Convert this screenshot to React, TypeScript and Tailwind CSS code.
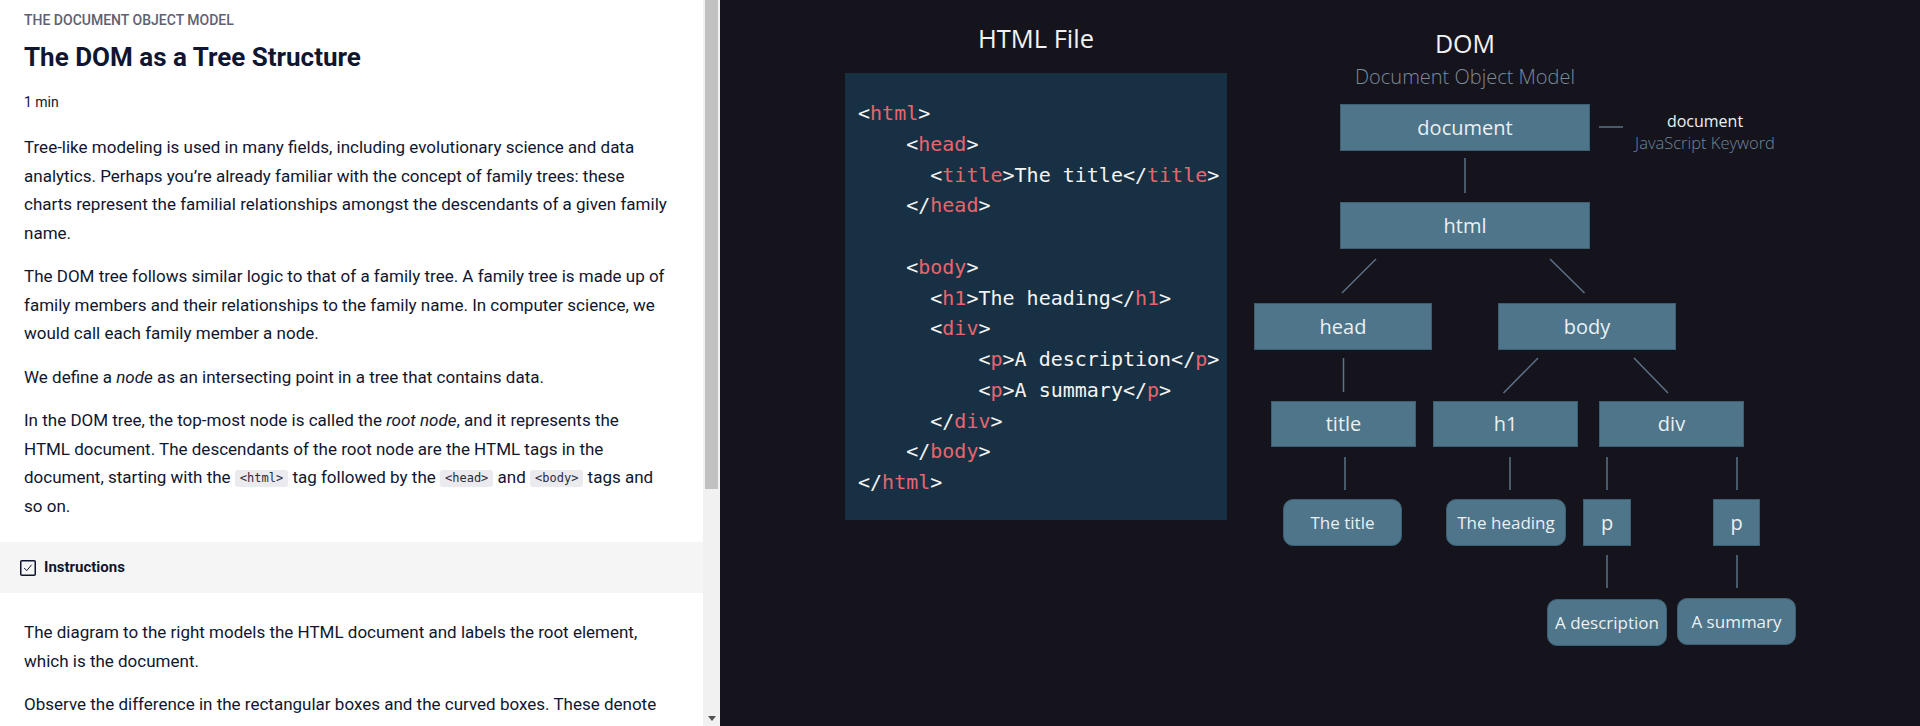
import React from "react";

const sans = { fontFamily: "Roboto, 'Noto Sans', sans-serif" };

function Code({ children }: { children: React.ReactNode }) {
  return (
    <code className="inline-block rounded-[3px] bg-[#eaeaef] px-[5px] align-[1px] font-['DejaVu_Sans_Mono',monospace] text-[12px] leading-[17px] text-[#2b2d3a]">
      {children}
    </code>
  );
}

// one line of the html listing: indent in chars, tokens as [text, isTag]
const codeLines: { indent: number; parts: [string, boolean][] }[] = [
  { indent: 0, parts: [["<", false], ["html", true], [">", false]] },
  { indent: 4, parts: [["<", false], ["head", true], [">", false]] },
  { indent: 6, parts: [["<", false], ["title", true], [">The title</", false], ["title", true], [">", false]] },
  { indent: 4, parts: [["</", false], ["head", true], [">", false]] },
  { indent: 0, parts: [] },
  { indent: 4, parts: [["<", false], ["body", true], [">", false]] },
  { indent: 6, parts: [["<", false], ["h1", true], [">The heading</", false], ["h1", true], [">", false]] },
  { indent: 6, parts: [["<", false], ["div", true], [">", false]] },
  { indent: 10, parts: [["<", false], ["p", true], [">A description</", false], ["p", true], [">", false]] },
  { indent: 10, parts: [["<", false], ["p", true], [">A summary</", false], ["p", true], [">", false]] },
  { indent: 6, parts: [["</", false], ["div", true], [">", false]] },
  { indent: 4, parts: [["</", false], ["body", true], [">", false]] },
  { indent: 0, parts: [["</", false], ["html", true], [">", false]] },
];

type Node = { label: string; x: number; y: number; w: number; h: number; leaf?: boolean };

// diagram nodes, coordinates on the canvas
const nodes: Node[] = [
  { label: "document", x: 100, y: 104, w: 250, h: 47 },
  { label: "html", x: 100, y: 202, w: 250, h: 47 },
  { label: "head", x: 14, y: 303, w: 178, h: 47 },
  { label: "body", x: 258, y: 303, w: 178, h: 47 },
  { label: "title", x: 31, y: 401, w: 145, h: 46 },
  { label: "h1", x: 193, y: 401, w: 145, h: 46 },
  { label: "div", x: 359, y: 401, w: 145, h: 46 },
  { label: "The title", x: 43, y: 499, w: 119, h: 47, leaf: true },
  { label: "The heading", x: 206, y: 499, w: 120, h: 47, leaf: true },
  { label: "p", x: 343, y: 499, w: 48, h: 47 },
  { label: "p", x: 473, y: 499, w: 47, h: 47 },
  { label: "A description", x: 307, y: 599, w: 120, h: 47, leaf: true },
  { label: "A summary", x: 437, y: 598, w: 119, h: 47, leaf: true },
];

const edges: [number, number, number, number][] = [
  [225, 158, 225, 193],
  [136, 259, 102, 293],
  [310, 259, 344.5, 293],
  [103.5, 358, 103.5, 392],
  [298, 358, 263.5, 393],
  [394, 358, 428, 393],
  [105, 457, 105, 490],
  [270, 457, 270, 490],
  [367, 457, 367, 490],
  [497, 457, 497, 490],
  [367, 555, 367, 588],
  [497, 555, 497, 588],
  [359, 127, 383, 127],
];

export default function App() {
  return (
    <div className="flex h-[726px] w-[1920px] overflow-hidden">
      {/* Lesson text */}
      <div className="w-[703px] flex-none overflow-hidden bg-white text-[#10162f]" style={sans}>
        <div className="pl-6 pr-3 pt-[10px]">
          <div className="text-[14px] font-medium uppercase leading-[20px] text-[#5e6170]">The Document Object Model</div>
          <h1 className="mt-[11px] text-[26px] font-bold leading-[33px]">The DOM as a Tree Structure</h1>
          <div className="mt-[18px] text-[14px] leading-[20px]">1 min</div>
          <div className="mt-[21px] space-y-[15px] text-[17px] leading-[28.5px]">
            <p>
              Tree-like modeling is used in many fields, including evolutionary science and data
              <br />
              analytics. Perhaps you’re already familiar with the concept of family trees: these
              <br />
              charts represent the familial relationships amongst the descendants of a given family
              <br />
              name.
            </p>
            <p>
              The DOM tree follows similar logic to that of a family tree. A family tree is made up of
              <br />
              family members and their relationships to the family name. In computer science, we
              <br />
              would call each family member a node.
            </p>
            <p>
              We define a <em>node</em> as an intersecting point in a tree that contains data.
            </p>
            <p>
              In the DOM tree, the top-most node is called the <em>root node</em>, and it represents the
              <br />
              HTML document. The descendants of the root node are the HTML tags in the
              <br />
              document, starting with the <Code>&lt;html&gt;</Code> tag followed by the <Code>&lt;head&gt;</Code> and{" "}
              <Code>&lt;body&gt;</Code> tags and
              <br />
              so on.
            </p>
          </div>
        </div>

        {/* Instructions header */}
        <div className="mt-[22px] flex h-[51px] items-center gap-2 bg-[#f5f5f5] px-5">
          <svg width="16" height="16" viewBox="0 0 16 16" fill="none">
            <rect x="0.75" y="0.75" width="14.5" height="14.5" rx="1" stroke="#10162f" strokeWidth="1.5" />
            <path d="M4.5 8.3l2.2 2.4 4.6-5.6" stroke="#10162f" strokeWidth="1" strokeLinecap="round" strokeLinejoin="round" />
          </svg>
          <span className="text-[15px] font-bold">Instructions</span>
        </div>

        <div className="mt-[25px] space-y-[15px] pl-6 pr-3 text-[17px] leading-[28.5px]">
          <p>
            The diagram to the right models the HTML document and labels the root element,
            <br />
            which is the document.
          </p>
          <p>
            Observe the difference in the rectangular boxes and the curved boxes. These denote
            <br />
            different types of nodes, which we will cover in the next exercise.
          </p>
        </div>
      </div>

      {/* Scrollbar */}
      <div className="flex w-[17px] flex-none flex-col bg-[#f1f1f1]">
        <div className="ml-[2px] h-[489px] w-[13px] bg-[#c1c1c1]" />
        <div className="flex-1" />
        <div className="flex h-[15px] items-center justify-center pl-[1px]">
          <svg width="8" height="5" viewBox="0 0 8 5">
            <path d="M0 0h8L4 5z" fill="#505050" />
          </svg>
        </div>
      </div>

      {/* Diagram panel */}
      <div className="flex flex-1 bg-[#15141d] pl-[125px]" style={{ fontFamily: "'Open Sans', 'Noto Sans', sans-serif" }}>
        <div className="w-[382px] flex-none">
          <div className="pt-[21px] text-center text-[25.5px] leading-[34px] text-[#f2f2f4]">HTML File</div>
          <div className="mt-[18px] h-[447px] bg-[#183044] px-[13px] pt-[25px] font-['DejaVu_Sans_Mono',monospace] text-[20px] leading-[30.75px] text-[#f4f4f4]">
            {codeLines.map((line, i) => (
              <div key={i} className="h-[30.75px] whitespace-pre">
                {" ".repeat(line.indent)}
                {line.parts.map(([t, tag], j) => (
                  <span key={j} className={tag ? "text-[#e8646e]" : ""}>
                    {t}
                  </span>
                ))}
              </div>
            ))}
          </div>
        </div>

        <div className="relative ml-[13px] h-full flex-1">
          <div className="absolute left-[125px] top-[26px] w-[200px] text-center text-[25px] leading-[34px] text-[#f2f2f4]">DOM</div>
          <div className="absolute left-[75px] top-[63px] w-[300px] text-center text-[20px] font-light leading-[28px] text-[#7a8b99]">
            Document Object Model
          </div>
          <div className="absolute left-[385px] top-[110px] w-[160px] text-center text-[16px] leading-[22px]">
            <div className="text-[#eef0f3]">document</div>
            <div className="text-[16.5px] font-light text-[#6f8596]">JavaScript Keyword</div>
          </div>

          <svg className="absolute left-0 top-0" width="680" height="726">
            {edges.map(([x1, y1, x2, y2], i) => (
              <line key={i} x1={x1} y1={y1} x2={x2} y2={y2} stroke="#5a7386" strokeWidth="1.5" />
            ))}
          </svg>

          {nodes.map((n, i) => (
            <div
              key={i}
              className={`absolute flex items-center justify-center border border-[#3e5e71] bg-[#4e7589] text-[#eaf0f3] ${
                n.leaf ? "rounded-[10px] text-[17px]" : "text-[20px]"
              }`}
              style={{ left: n.x, top: n.y, width: n.w, height: n.h }}
            >
              {n.label}
            </div>
          ))}
        </div>
      </div>
    </div>
  );
}
